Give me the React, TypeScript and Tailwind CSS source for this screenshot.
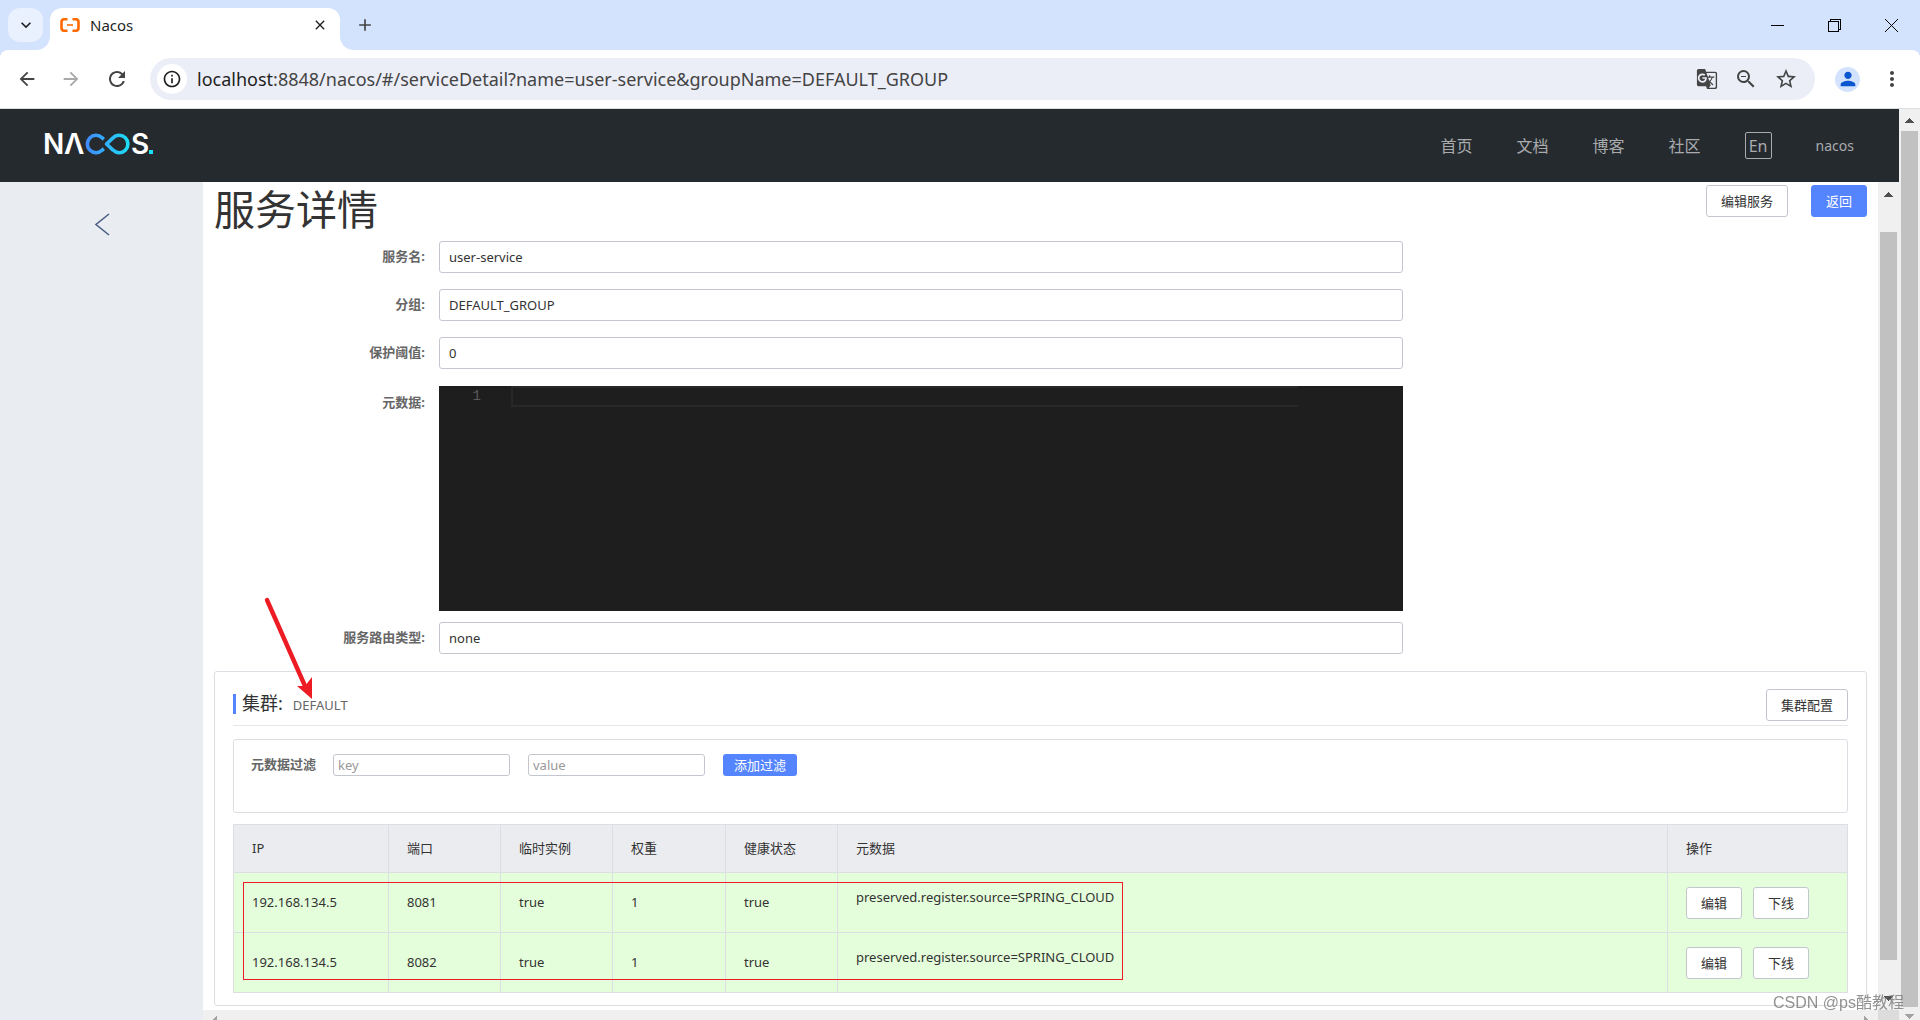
import { useState } from 'react'
import {
  MdAdd,
  MdArrowBack,
  MdArrowForward,
  MdClose,
  MdGTranslate,
  MdInfoOutline,
  MdKeyboardArrowDown,
  MdMoreVert,
  MdPerson,
  MdRefresh,
  MdStarBorder,
  MdZoomOut,
} from 'react-icons/md'

type Instance = {
  ip: string
  port: number
  ephemeral: boolean
  weight: number
  healthy: boolean
  metadata: string
}

const instances: Instance[] = [
  {
    ip: '192.168.134.5',
    port: 8081,
    ephemeral: true,
    weight: 1,
    healthy: true,
    metadata: 'preserved.register.source=SPRING_CLOUD',
  },
  {
    ip: '192.168.134.5',
    port: 8082,
    ephemeral: true,
    weight: 1,
    healthy: true,
    metadata: 'preserved.register.source=SPRING_CLOUD',
  },
]

const navLinks = ['首页', '文档', '博客', '社区']

const btn = 'h-8 rounded-[3px] border px-[14px] text-[13px] leading-5 whitespace-nowrap'
const btnNormal = `${btn} border-[#c4c6cf] bg-white text-[#333]`
const btnPrimary = `${btn} border-[#5584ff] bg-[#5584ff] text-white`
const cell = 'border border-[#dcdee3] px-[18px] text-left font-normal'

function TabStrip() {
  return (
    <div className="flex h-[50px] items-end bg-[#d3e2fd] pl-2">
      <button
        type="button"
        aria-label="Search tabs"
        className="mb-2 flex h-[34px] w-[35px] items-center justify-center rounded-xl bg-[#e9f0fe] text-[#1f1f1f]"
      >
        <MdKeyboardArrowDown className="h-5 w-5" />
      </button>
      <div className="relative ml-[7px] flex h-[42px] w-[290px] items-center rounded-t-xl bg-white pb-2 pl-[10px] pr-3">
        <svg className="absolute -left-[14px] bottom-0 h-[14px] w-[14px]" viewBox="0 0 14 14">
          <path d="M14 0v14H0C8 14 14 8 14 0z" fill="#fff" />
        </svg>
        <svg className="absolute -right-[14px] bottom-0 h-[14px] w-[14px]" viewBox="0 0 14 14">
          <path d="M0 0v14h14C6 14 0 8 0 0z" fill="#fff" />
        </svg>
        <svg className="h-[14px] w-5" viewBox="0 0 20 14" fill="none" stroke="#ff6a00">
          <path d="M7.500 1.300H4Q1.500 1.500 1.500 4v6Q1.500 12.500 4 12.700h3.500" strokeWidth="2.600" />
          <path d="M12.500 1.300h3.500q2.500.2 2.500 2.700v6q0 2.500-2.500 2.700h-3.500" strokeWidth="2.600" />
          <path d="M7 7h6" strokeWidth="1.600" />
        </svg>
        <span className="ml-[10px] flex-1 text-[15px] text-[#1f1f1f]">Nacos</span>
        <button type="button" aria-label="Close tab" className="text-[#1f1f1f]">
          <MdClose className="h-4 w-4" />
        </button>
      </div>
      <button type="button" aria-label="New tab" className="mb-[15px] ml-[15px] text-[#444]">
        <MdAdd className="h-5 w-5" />
      </button>
      <div className="ml-auto flex h-full items-center text-black">
        <button type="button" aria-label="Minimize" className="flex w-[57px] justify-center">
          <svg className="h-[13px] w-[13px]" viewBox="0 0 13 13" shapeRendering="crispEdges">
            <path d="M0 6.500h13" stroke="currentColor" />
          </svg>
        </button>
        <button type="button" aria-label="Restore" className="flex w-[57px] justify-center">
          <svg
            className="h-[13px] w-[13px]"
            viewBox="0 0 13 13"
            fill="none"
            stroke="currentColor"
            shapeRendering="crispEdges"
          >
            <path d="M.5 2.500h10v10h-10zM2.500 2.500v-2h10v10h-2" />
          </svg>
        </button>
        <button type="button" aria-label="Close" className="flex w-[57px] justify-center">
          <svg className="h-[13px] w-[13px]" viewBox="0 0 13 13" stroke="currentColor">
            <path d="M0 0l13 13M13 0L0 13" />
          </svg>
        </button>
      </div>
    </div>
  )
}

function Toolbar() {
  return (
    <div className="bg-[#d3e2fd]">
      <div className="flex h-[59px] items-center rounded-t-lg border-b border-[#dcdfe0] bg-white px-4 text-[#444]">
        <button type="button" aria-label="Back">
          <MdArrowBack className="h-[22px] w-[22px]" />
        </button>
        <button type="button" aria-label="Forward" className="ml-[22px] text-[#a9a9a9]">
          <MdArrowForward className="h-[22px] w-[22px]" />
        </button>
        <button type="button" aria-label="Reload" className="ml-[23px]">
          <MdRefresh className="h-6 w-6" />
        </button>
        <div className="ml-[21px] flex h-[42px] flex-1 items-center rounded-full bg-[#ebeef7] pl-[7px] pr-[17px]">
          <span className="flex h-[30px] w-[30px] items-center justify-center rounded-full bg-white text-[#1f1f1f]">
            <MdInfoOutline className="h-5 w-5" />
          </span>
          <p className="ml-[10px] flex-1 text-[18px] leading-6 text-[#444]">
            <span className="text-[#1f1f1f]">localhost</span>
            :8848/nacos/#/serviceDetail?name=user-service&amp;groupName=DEFAULT_GROUP
          </p>
          <div className="flex items-center gap-4">
            <button type="button" aria-label="Translate">
              <MdGTranslate className="h-[22px] w-[22px]" />
            </button>
            <button type="button" aria-label="Zoom out">
              <MdZoomOut className="h-6 w-6" />
            </button>
            <button type="button" aria-label="Bookmark">
              <MdStarBorder className="h-6 w-6" />
            </button>
          </div>
        </div>
        <button
          type="button"
          aria-label="Profile"
          className="ml-5 flex h-[25px] w-[25px] items-center justify-center rounded-full bg-[#d3e2fd] text-[#0b57d0]"
        >
          <MdPerson className="h-[22px] w-[22px]" />
        </button>
        <button type="button" aria-label="Menu" className="ml-5">
          <MdMoreVert className="h-6 w-6" />
        </button>
      </div>
    </div>
  )
}

function NacosLogo() {
  return (
    <svg className="h-10 w-[120px]" viewBox="-4 -6 120 40" role="img" aria-label="Nacos">
      <defs>
        <linearGradient id="loop" gradientUnits="userSpaceOnUse" x1="41" y1="0" x2="86" y2="0">
          <stop offset="0" stopColor="#4289ff" />
          <stop offset="1" stopColor="#1be1f6" />
        </linearGradient>
      </defs>
      <g className="font-['Inter'] text-[28px] font-semibold" fill="#fff">
        <text x="-2" y="24">N</text>
        <text x="19" y="24">Λ</text>
        <text x="86" y="24">S</text>
      </g>
      <path
        d="M58.800 18.700L57 20.300A8.700 8.700 0 1 1 57 7.700L58.800 9.300M61.500 14L68 7.900A8.700 8.700 0 1 1 68 20.100z"
        fill="none"
        stroke="url(#loop)"
        strokeWidth="3.600"
        strokeLinejoin="round"
      />
      <rect x="104" y="20" width="4" height="4" fill="#1be1f6" />
    </svg>
  )
}

function Header() {
  return (
    <header className="flex h-[73px] items-center justify-between bg-[#252a2f] pl-[41px] pr-[45px]">
      <a href="#/" className="mb-1">
        <NacosLogo />
      </a>
      <nav className="flex items-center gap-11 text-base text-[#a9abad]">
        {navLinks.map((label) => (
          <a key={label} href="#/">
            {label}
          </a>
        ))}
        <button
          type="button"
          className="h-[27px] w-[27px] rounded-[2px] border border-[#a9abad] text-base leading-6"
        >
          En
        </button>
        <a href="#/" className="text-sm">
          nacos
        </a>
      </nav>
    </header>
  )
}

function Field({ id, label, value }: { id: string; label: string; value: string }) {
  return (
    <div className="mb-4 flex items-center">
      <label htmlFor={id} className="w-[225px] pr-[14px] text-right text-[13px] font-bold text-[#666]">
        {label}:
      </label>
      <input
        id={id}
        defaultValue={value}
        className="h-8 w-7/12 rounded-[3px] border border-[#c4c6cf] bg-white px-[9px] text-[13px] text-[#333] outline-none"
      />
    </div>
  )
}

function ClusterCard() {
  const [filterKey, setFilterKey] = useState('')
  const [filterValue, setFilterValue] = useState('')

  return (
    <section className="mt-[17px] rounded-[3px] border border-[#dcdee3] px-[18px] pb-3 pt-[17px]">
      <div className="flex h-[37px] items-start justify-between border-b border-[#e6e7eb]">
        <h2 className="mt-[5px] flex items-baseline border-l-[3px] border-[#5584ff] pl-[6px] text-lg leading-[18px] text-[#333]">
          集群:
          <span className="ml-[10px] text-[13px] leading-[18px] text-[#666]">DEFAULT</span>
        </h2>
        <button type="button" className={btnNormal}>
          集群配置
        </button>
      </div>

      <div className="mt-[13px] h-[74px] rounded-[3px] border border-[#dcdee3] px-[17px] pt-[14px]">
        <div className="flex items-center">
          <label htmlFor="filter-key" className="text-[13px] font-bold text-[#666]">
            元数据过滤
          </label>
          <input
            id="filter-key"
            placeholder="key"
            value={filterKey}
            onChange={(event) => setFilterKey(event.target.value)}
            className="ml-[17px] h-[22px] w-[177px] rounded-[3px] border border-[#c4c6cf] px-1 text-[13px] outline-none placeholder:text-[#999]"
          />
          <input
            aria-label="value"
            placeholder="value"
            value={filterValue}
            onChange={(event) => setFilterValue(event.target.value)}
            className="ml-[18px] h-[22px] w-[177px] rounded-[3px] border border-[#c4c6cf] px-1 text-[13px] outline-none placeholder:text-[#999]"
          />
          <button
            type="button"
            className="ml-[18px] h-[22px] rounded-[3px] bg-[#5584ff] px-[11px] text-[13px] leading-5 text-white"
          >
            添加过滤
          </button>
        </div>
      </div>

      <div className="relative mt-[11px]">
        <table className="w-full table-fixed border-collapse text-[13px] text-[#333]">
          <colgroup>
            <col className="w-[155px]" />
            <col className="w-[112px]" />
            <col className="w-[112px]" />
            <col className="w-[113px]" />
            <col className="w-[112px]" />
            <col />
            <col className="w-[180px]" />
          </colgroup>
          <thead>
            <tr className="h-12 bg-[#ebecf0]">
              <th className={cell}>IP</th>
              <th className={cell}>端口</th>
              <th className={cell}>临时实例</th>
              <th className={cell}>权重</th>
              <th className={cell}>健康状态</th>
              <th className={cell}>元数据</th>
              <th className={cell}>操作</th>
            </tr>
          </thead>
          <tbody>
            {instances.map((item) => (
              <tr key={item.port} className="h-[60px] bg-[#e4fdda]">
                <td className={cell}>{item.ip}</td>
                <td className={cell}>{item.port}</td>
                <td className={cell}>{String(item.ephemeral)}</td>
                <td className={cell}>{item.weight}</td>
                <td className={cell}>{String(item.healthy)}</td>
                <td className={cell}>
                  <p className="pb-[10px]">{item.metadata}</p>
                </td>
                <td className={cell}>
                  <div className="flex gap-[11px]">
                    <button type="button" className={btnNormal}>
                      编辑
                    </button>
                    <button type="button" className={btnNormal}>
                      下线
                    </button>
                  </div>
                </td>
              </tr>
            ))}
          </tbody>
        </table>
        <div className="pointer-events-none absolute left-[10px] top-[58px] h-[98px] w-[880px] border border-[#ed1c24]" />
      </div>
    </section>
  )
}

function ServiceDetail() {
  return (
    <main className="relative flex-1 overflow-hidden bg-white px-[11px]">
      <div className="flex h-[59px] items-start justify-between">
        <h1 className="text-[41px] leading-[54px] text-[#333]">服务详情</h1>
        <div className="mt-[3px] flex gap-[23px]">
          <button type="button" className={btnNormal}>
            编辑服务
          </button>
          <button type="button" className={btnPrimary}>
            返回
          </button>
        </div>
      </div>

      <form>
        <Field id="name" label="服务名" value="user-service" />
        <Field id="group" label="分组" value="DEFAULT_GROUP" />
        <Field id="threshold" label="保护阈值" value="0" />
        <div className="mb-[11px] mt-[17px] flex items-start">
          <label
            htmlFor="metadata"
            className="w-[225px] pr-[14px] text-right text-[13px] font-bold leading-8 text-[#666]"
          >
            元数据:
          </label>
          <div className="flex h-[225px] w-7/12 items-start bg-[#1e1e1e]">
            <span className="w-[72px] pr-[30px] text-right font-['Liberation_Mono'] text-sm leading-[21px] text-[#5a5a5a]">
              1
            </span>
            <textarea
              id="metadata"
              rows={1}
              className="mr-[105px] h-[21px] flex-1 resize-none border-2 border-r-0 border-[#282828] bg-transparent font-['Liberation_Mono'] text-sm leading-4 text-white outline-none"
            />
          </div>
        </div>
        <Field id="selector" label="服务路由类型" value="none" />
      </form>

      <ClusterCard />

      <svg
        className="pointer-events-none absolute left-[60px] top-[412px] h-[110px] w-[60px]"
        viewBox="0 0 60 110"
      >
        <path d="M4 6l38 86" stroke="#ed1c24" strokeWidth="4.400" strokeLinecap="round" />
        <path d="M49 105l-15-13 8 0 7-9z" fill="#ed1c24" />
      </svg>
    </main>
  )
}

function ScrollArrow({ className }: { className: string }) {
  return (
    <svg className={className} viewBox="0 0 9 5" shapeRendering="crispEdges">
      <path d="M4.500 0L9 5H0z" fill="currentColor" />
    </svg>
  )
}

export default function App() {
  return (
    <div className="flex h-screen flex-col overflow-hidden font-['Noto_Sans','Noto_Sans_CJK_SC',sans-serif]">
      <TabStrip />
      <Toolbar />
      <div className="flex min-h-0 flex-1">
        <div className="flex min-w-0 flex-1 flex-col">
          <Header />
          <div className="flex min-h-0 flex-1">
            <aside className="w-[203px] bg-[#e9ecf1] pt-[31px]">
              <button type="button" aria-label="返回" className="mx-auto block text-[#4c5f85]">
                <svg className="h-[23px] w-4" viewBox="0 0 16 23" fill="none" stroke="currentColor">
                  <path d="M15 1L2 11.500l13 10.500" strokeWidth="1.600" />
                </svg>
              </button>
            </aside>
            <div className="flex min-w-0 flex-1 flex-col">
              <div className="flex min-h-0 flex-1">
                <ServiceDetail />
                <div className="flex w-[21px] flex-col items-center bg-[#f0f0f0] pb-[9px] pt-[10px] text-[#505050]">
                  <ScrollArrow className="h-[5px] w-[9px]" />
                  <div className="mb-9 mt-[35px] w-[17px] flex-1 bg-[#c1c1c1]" />
                  <ScrollArrow className="h-[5px] w-[9px] rotate-180" />
                </div>
              </div>
              <div className="flex h-[10px] justify-between overflow-hidden bg-[#f0f0f0] text-[#a3a3a3]">
                <ScrollArrow className="ml-[7px] mt-2 h-[5px] w-[9px] -rotate-90" />
                <div className="flex">
                  <ScrollArrow className="mr-[7px] mt-2 h-[5px] w-[9px] rotate-90" />
                  <div className="w-[21px] bg-[#dcdcdc]" />
                </div>
              </div>
            </div>
          </div>
        </div>
        <div className="flex w-[21px] flex-col items-center bg-[#f0f0f0] pb-px pt-[9px]">
          <ScrollArrow className="h-[5px] w-[9px] text-[#505050]" />
          <div className="mb-[7px] mt-2 w-[17px] flex-1 bg-[#c1c1c1]" />
          <ScrollArrow className="h-[5px] w-[9px] rotate-180 text-[#a3a3a3]" />
        </div>
      </div>
      <p className="pointer-events-none fixed bottom-1 right-4 font-['Liberation_Sans','Noto_Sans_CJK_SC',sans-serif] text-base leading-[26px] text-[#777]/80">
        CSDN @ps酷教程
      </p>
    </div>
  )
}
